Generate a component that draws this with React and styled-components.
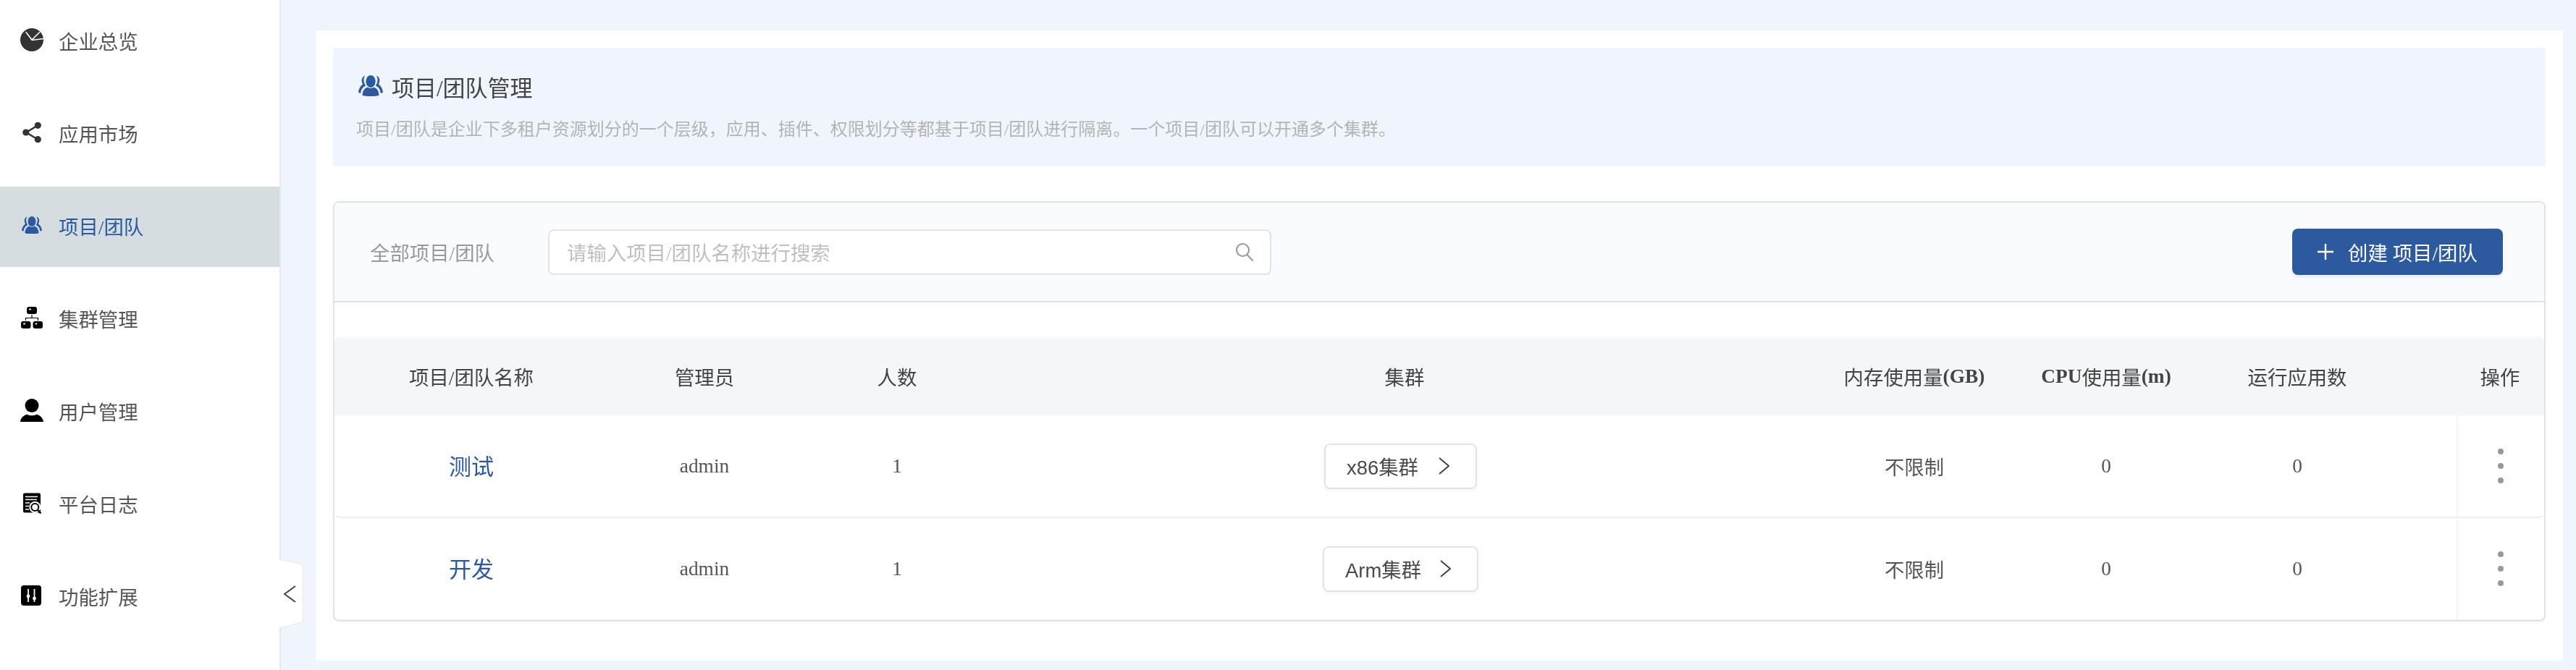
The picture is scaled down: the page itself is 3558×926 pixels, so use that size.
import React from "react";
import styled, { createGlobalStyle } from "styled-components";

const SERIF = `"Liberation Serif", "Noto Sans CJK SC", serif`;
const SANS = `"Liberation Sans", "Noto Sans CJK SC", sans-serif`;
const BLUE = "#2d5a9e";

const GlobalStyle = createGlobalStyle`
  html, body {
    margin: 0;
    height: 926px;
    overflow: hidden;
    background: #f0f4fc;
    font-family: ${SERIF};
    color: #555;
  }
  * { box-sizing: border-box; }
`;

const Layout = styled.div`
  position: relative;
  display: flex;
  width: 3558px;
  height: 926px;
  will-change: transform;
`;

const Sidebar = styled.nav`
  flex: 0 0 388px;
  height: 100%;
  background: #fff;
  border-right: 2px solid #e8e8e8;
  padding-top: 2px;
  display: flex;
  flex-direction: column;
  gap: 17px;
`;

const NavItem = styled.a`
  display: flex;
  align-items: center;
  height: 111px;
  padding: 0 0 3px 28px;
  gap: 21px;
  font-size: 27.4px;
  color: ${(p) => (p.$active ? BLUE : "#555")};
  background: ${(p) => (p.$active ? "#d6dde1" : "transparent")};
`;

const NavIcon = styled.svg`
  flex: none;
  width: 32px;
  height: 32px;
  margin-top: -3px;
`;

const CollapseTab = styled.svg`
  position: absolute;
  left: 386px;
  top: 772px;
  width: 34px;
  height: 98px;
`;

const Main = styled.main`
  flex: 1;
  padding: 42px 18px 13px 48px;
`;

const Panel = styled.section`
  height: 100%;
  background: #fff;
  padding: 24px 24px 54px;
  display: flex;
  flex-direction: column;
  gap: 48px;
`;

const Intro = styled.header`
  height: 164px;
  background: #f0f4fc;
  padding: 39px 32px 0;
`;

const IntroTitle = styled.h2`
  margin: 0;
  display: flex;
  align-items: center;
  gap: 12px;
  height: 36px;
  padding-left: 3px;
  font-size: 31px;
  font-weight: 400;
  line-height: 36px;
  color: #444;
`;

const TitleIcon = styled.svg`
  flex: none;
  width: 34px;
  height: 29px;
  margin-top: -10px;
`;

const IntroText = styled.p`
  margin: 23px 0 0;
  font-size: 24px;
  line-height: 30px;
  color: #b3b3b3;
`;

const Card = styled.div`
  flex: 1;
  border: 2px solid #e3e3e3;
  border-radius: 8px;
  overflow: hidden;
`;

const Toolbar = styled.div`
  display: flex;
  align-items: center;
  height: 138px;
  padding: 0 57px 0 49px;
  background: #fafbff;
  border-bottom: 2px solid #e3e3e3;
`;

const ToolbarLabel = styled.span`
  font-size: 27.4px;
  color: #999;
  width: 246px;
`;

const SearchBox = styled.div`
  display: flex;
  align-items: center;
  justify-content: space-between;
  width: 999px;
  height: 63px;
  padding: 0 22px 0 24px;
  background: #fff;
  border: 2px solid #e3e3e3;
  border-radius: 8px;
  font-size: 27.4px;
  color: #bfbfbf;
`;

const CreateButton = styled.button`
  margin-left: auto;
  display: flex;
  align-items: center;
  gap: 20px;
  width: 291px;
  height: 64px;
  padding: 0 0 0 35px;
  border: 0;
  border-radius: 8px;
  background: ${BLUE};
  box-shadow: 0 4px 0 #eff1f5;
  color: #fff;
  font-family: ${SERIF};
  font-size: 27.4px;
  white-space: pre;
`;

const Table = styled.div`
  margin-top: 48px;
`;

const Row = styled.div`
  display: grid;
  grid-template-columns: 378px 266px 266px 1136px 272px 258px 355px 120px;
  height: ${(p) => (p.$head ? "108px" : "142px")};
  background: ${(p) => (p.$head ? "#f5f6f8" : "#fff")};
  border-radius: ${(p) => (p.$head ? "8px 8px 0 0" : "0 0 8px 8px")};
  border-bottom: ${(p) => (p.$head ? "0" : "2px solid #f0f0f0")};
`;

const Cell = styled.div`
  display: flex;
  align-items: center;
  justify-content: center;
  font-size: ${(p) => (p.$link ? "31px" : "27.4px")};
  color: ${(p) => (p.$link ? BLUE : "#555")};
  padding-right: ${(p) => p.$pad || 0}px;
  padding-bottom: ${(p) => (p.$link ? "3px" : "0")};
  border-left: ${(p) => (p.$divided ? "2px solid #f4f4f4" : "0")};
`;

const HeadCell = styled(Cell)`
  color: #444;
  b { font-weight: 700; }
`;

const ClusterButton = styled.button`
  display: flex;
  align-items: center;
  justify-content: space-between;
  width: ${(p) => p.$width}px;
  height: 63px;
  padding: 0 36px 0 29px;
  background: #fff;
  border: 2px solid #e3e3e3;
  border-radius: 8px;
  box-shadow: 0 3px 6px rgba(0, 0, 0, 0.04);
  font-family: ${SANS};
  font-size: 27.4px;
  color: #4a4a4a;
`;

const Dots = styled.span`
  display: flex;
  flex-direction: column;
  gap: 11.5px;
  i {
    width: 8.5px;
    height: 8.5px;
    border-radius: 50%;
    background: #999;
  }
`;

const PieIcon = () => (
  <NavIcon viewBox="0 0 32 32">
    <circle cx="16" cy="16" r="16" fill="#333" />
    <path d="M7.7 5.3L16 16 27 5.3M16 16.5l16-2" fill="none" stroke="#fff" strokeWidth="1.6" />
  </NavIcon>
);

const ShareIcon = () => (
  <NavIcon viewBox="0 0 32 32">
    <path d="M8 16L24 6.5M8 16l16 9.5" stroke="#333" strokeWidth="2.6" fill="none" />
    <circle cx="7.8" cy="16" r="4.6" fill="#333" />
    <circle cx="24.3" cy="6.3" r="4.6" fill="#333" />
    <circle cx="24.3" cy="25.7" r="4.6" fill="#333" />
  </NavIcon>
);

const SIDE_FIGURE = "M7.6.6C4 1.4 2.6 6 5 10.4 2.6 12 .4 15 0 19.6c.8.6 1.8.8 2.6.8C3 16.4 4.8 13.4 8.4 12 5.6 8 5.4 3.6 7.6.6z";

const USERS_PATHS = (
  <>
    <ellipse cx="14" cy="7" rx="5.5" ry="7" />
    <path d="M4.5 23.2c0-5.6 2.6-8.4 6-9.6 2 1.6 5 1.6 7 0 3.4 1.2 6 4 6 9.6-4.6 1.2-14.4 1.2-19 0z" />
    <path d={SIDE_FIGURE} />
    <path d={SIDE_FIGURE} transform="matrix(-1 0 0 1 28 0)" />
  </>
);

const UsersIcon = () => (
  <NavIcon viewBox="-2 -4 32 32" fill={BLUE}>
    {USERS_PATHS}
  </NavIcon>
);

const ClusterIcon = () => (
  <NavIcon viewBox="0 0 32 32">
    <rect x="9" y="1" width="14" height="10" rx="3" />
    <rect x="1" y="21" width="13.5" height="10" rx="3" />
    <rect x="17.5" y="21" width="13.5" height="10" rx="3" />
    <path d="M16 12v4M7.5 16.5h17M7.5 16v4M24.5 16v4" stroke="#000" strokeWidth="1.2" fill="none" />
    <g fill="#fff">
      <rect x="12" y="3.4" width="3" height="2" rx="1" />
      <rect x="4" y="23.4" width="3" height="2" rx="1" />
      <rect x="20.5" y="23.4" width="3" height="2" rx="1" />
    </g>
  </NavIcon>
);

const UserIcon = () => (
  <NavIcon viewBox="0 0 32 32">
    <circle cx="16" cy="9.5" r="9.5" />
    <path d="M0 32c.6-6 5-9 9.6-10.2 3.6 2 9.2 2 12.8 0C27 23 31.4 26 32 32z" />
  </NavIcon>
);

const LogIcon = () => (
  <NavIcon viewBox="0 0 32 32">
    <path d="M6 2.5h20a2 2 0 0 1 2 2v25H6a2 2 0 0 1-2-2v-23a2 2 0 0 1 2-2z" />
    <path d="M7 7.5h17M7 11.5h16M7 16h6M7 20.5h5M7 25h5" stroke="#fff" strokeWidth="1.6" />
    <circle cx="20.3" cy="22" r="8" fill="#fff" />
    <circle cx="20.3" cy="22" r="5" fill="none" stroke="#000" strokeWidth="2" />
    <path d="M24 25.8l4.4 4.7" stroke="#000" strokeWidth="2.4" />
  </NavIcon>
);

const SliderIcon = () => (
  <NavIcon viewBox="0 0 32 32">
    <rect x="1" y="2" width="28" height="28" rx="4" />
    <path d="M11 7v18M19.5 7v18" stroke="#fff" strokeWidth="1.8" />
    <rect x="8.8" y="15" width="4.4" height="4" rx="1" fill="#fff" />
    <rect x="17.3" y="18" width="4.4" height="4" rx="1" fill="#fff" />
  </NavIcon>
);

const NAV = [
  { label: "企业总览", icon: PieIcon },
  { label: "应用市场", icon: ShareIcon },
  { label: "项目/团队", icon: UsersIcon, active: true },
  { label: "集群管理", icon: ClusterIcon },
  { label: "用户管理", icon: UserIcon },
  { label: "平台日志", icon: LogIcon },
  { label: "功能扩展", icon: SliderIcon },
];

const TEAMS = [
  { name: "测试", cluster: "x86集群", width: 211 },
  { name: "开发", cluster: "Arm集群", width: 215 },
];

const Chevron = () => (
  <svg width="15" height="24" viewBox="0 0 15 24" fill="none" stroke="#444" strokeWidth="2">
    <path d="M1 1l13 11L1 23" />
  </svg>
);

export default function App() {
  return (
    <Layout>
      <GlobalStyle />
      <Sidebar>
        {NAV.map(({ label, icon: Icon, active }) => (
          <NavItem key={label} $active={active}>
            <Icon />
            {label}
          </NavItem>
        ))}
      </Sidebar>
      <CollapseTab viewBox="0 0 34 98">
        <path d="M0 1l32 7v80L0 96z" fill="#fff" />
        <path d="M0 1l32 7v80L0 96" fill="none" stroke="#e8e8e8" strokeWidth="1" />
        <path d="M22 38L7 49l15 11" fill="none" stroke="#444" strokeWidth="2" />
      </CollapseTab>
      <Main>
        <Panel>
          <Intro>
            <IntroTitle>
              <TitleIcon viewBox="0 0 28 24" fill={BLUE}>
                {USERS_PATHS}
              </TitleIcon>
              项目/团队管理
            </IntroTitle>
            <IntroText>
              项目/团队是企业下多租户资源划分的一个层级，应用、插件、权限划分等都基于项目/团队进行隔离。一个项目/团队可以开通多个集群。
            </IntroText>
          </Intro>
          <Card>
            <Toolbar>
              <ToolbarLabel>全部项目/团队</ToolbarLabel>
              <SearchBox>
                请输入项目/团队名称进行搜索
                <svg width="26" height="26" viewBox="0 0 26 26" fill="none" stroke="#999" strokeWidth="2">
                  <circle cx="10.5" cy="10.5" r="8.5" />
                  <path d="M16.5 17l8 8.5" />
                </svg>
              </SearchBox>
              <CreateButton>
                <svg width="22" height="22" viewBox="0 0 22 22" stroke="#fff" strokeWidth="2.4">
                  <path d="M11 0v22M0 11h22" />
                </svg>
                创建 项目/团队
              </CreateButton>
            </Toolbar>
            <Table>
              <Row $head>
                <HeadCell>项目/团队名称</HeadCell>
                <HeadCell>管理员</HeadCell>
                <HeadCell>人数</HeadCell>
                <HeadCell>集群</HeadCell>
                <HeadCell>内存使用量<b>(GB)</b></HeadCell>
                <HeadCell><b>CPU</b>使用量<b>(m)</b></HeadCell>
                <HeadCell $pad={85}>运行应用数</HeadCell>
                <HeadCell>操作</HeadCell>
              </Row>
              {TEAMS.map((team) => (
                <Row key={team.name}>
                  <Cell $link>{team.name}</Cell>
                  <Cell>admin</Cell>
                  <Cell>1</Cell>
                  <Cell $pad={11}>
                    <ClusterButton $width={team.width}>
                      {team.cluster}
                      <Chevron />
                    </ClusterButton>
                  </Cell>
                  <Cell>不限制</Cell>
                  <Cell>0</Cell>
                  <Cell $pad={85}>0</Cell>
                  <Cell $divided>
                    <Dots><i /><i /><i /></Dots>
                  </Cell>
                </Row>
              ))}
            </Table>
          </Card>
        </Panel>
      </Main>
    </Layout>
  );
}
